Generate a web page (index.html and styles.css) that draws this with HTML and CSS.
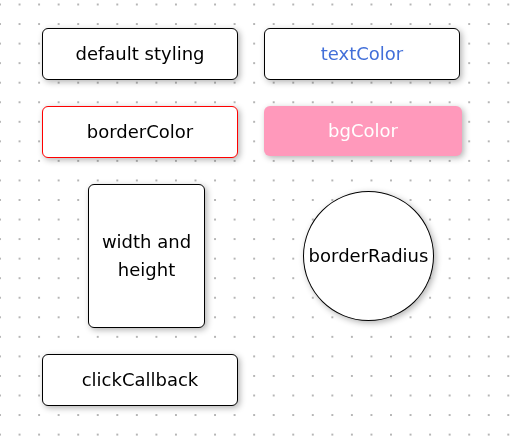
FILE: index.html
```
<!DOCTYPE html>
<html lang="en">
<head>
<meta charset="utf-8">
<meta name="viewport" content="width=device-width, initial-scale=1">
<title>Button styles</title>
<link rel="stylesheet" href="styles.css">
</head>
<body>
<svg class="dots" aria-hidden="true">
  <defs>
    <pattern id="dot" width="20" height="20" patternUnits="userSpaceOnUse" patternTransform="translate(-9.78 -5.28) scale(0.9775)">
      <circle cx="10" cy="10" r="0.75" fill="#444"/>
    </pattern>
  </defs>
  <rect width="100%" height="100%" fill="url(#dot)"/>
</svg>
<main class="board">
  <button class="node" type="button">default styling</button>
  <button class="node node-text" type="button">textColor</button>
  <button class="node node-border" type="button">borderColor</button>
  <button class="node node-fill" type="button">bgColor</button>
  <button class="node node-sized" type="button">width and height</button>
  <button class="node node-round" type="button">borderRadius</button>
  <button class="node" type="button">clickCallback</button>
</main>
</body>
</html>
```
FILE: styles.css
```
* {
  box-sizing: border-box;
}

body {
  margin: 0;
  background: #fff;
  font-family: "DejaVu Sans", sans-serif;
}

.dots {
  position: fixed;
  inset: 0;
  z-index: -1;
  width: 100%;
  height: 100%;
}

.board {
  display: grid;
  grid-template-columns: 1fr 1fr;
  gap: 26px 13px;
  padding: 28px 42px;
}

.node {
  width: 196px;
  height: 52px;
  padding: 0;
  border: 1px solid #000;
  border-radius: 6px;
  background: #fff;
  color: #000;
  box-shadow: 2px 2px 6px rgba(0, 0, 0, 0.3);
  font: inherit;
  font-size: 18px;
  line-height: 28px;
  cursor: pointer;
}

.node-text {
  color: #426fd9;
}

.node-border {
  border-color: #f00;
}

.node-fill {
  width: 198px;
  height: 50px;
  border: 0;
  background: #ff99bb;
  color: #fff;
}

.node-sized {
  justify-self: center;
  width: 117px;
  height: 144px;
}

.node-round {
  place-self: center;
  width: 131px;
  height: 130px;
  border-radius: 50%;
}
```
